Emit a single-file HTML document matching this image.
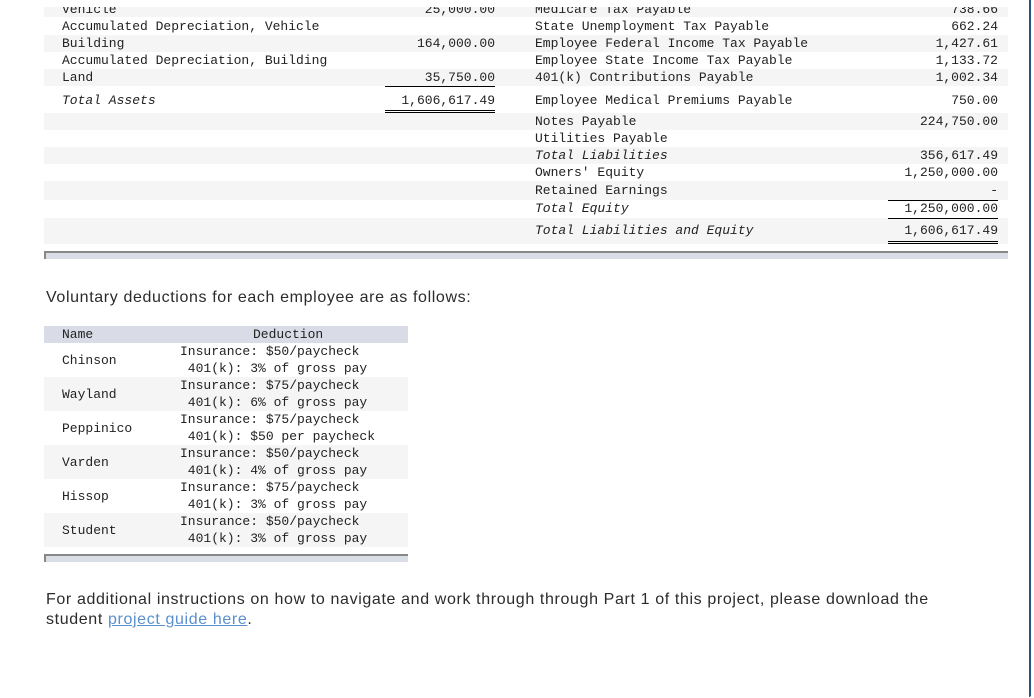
<!DOCTYPE html>
<html><head><meta charset="utf-8"><style>
*{margin:0;padding:0;box-sizing:border-box}
body{width:1034px;height:698px;background:#fff;position:relative;overflow:hidden;font-family:"Liberation Sans",sans-serif}
.m{font-family:"Liberation Mono",monospace;font-size:13px;color:#222;position:absolute;line-height:17px;white-space:pre}
.r{position:absolute;left:44px;width:964px}
.g{background:#f5f5f5}
.i{font-style:italic}
.v{text-align:right}
.ln{position:absolute;height:1px;background:#000}
.sb{position:absolute;height:8px;background:#d9dde6;border-top:2px solid #888;border-left:2px solid #888}
p{position:absolute;left:46px;font-size:16px;color:#2b2b2b;line-height:20px;letter-spacing:0.63px}
a{color:#5a8fcf;text-decoration:underline}
</style></head><body>
<div style="position:absolute;left:1029px;top:0;width:2px;height:697px;background:#2c5282;border-bottom-right-radius:4px"></div>
<!-- balance sheet rows -->
<div class="r g" style="top:7px;height:10px"></div>
<div class="r g" style="top:35px;height:17px"></div>
<div class="r g" style="top:69px;height:17px"></div>
<div class="r g" style="top:113px;height:17px"></div>
<div class="r g" style="top:147px;height:17px"></div>
<div class="r g" style="top:181px;height:19px"></div>
<div class="r g" style="top:218px;height:26px"></div>

<div class="m" style="left:62px;top:1px">Vehicle</div>
<div class="m" style="left:62px;top:18px">Accumulated Depreciation, Vehicle</div>
<div class="m" style="left:62px;top:35px">Building</div>
<div class="m" style="left:62px;top:52px">Accumulated Depreciation, Building</div>
<div class="m" style="left:62px;top:69px">Land</div>
<div class="m i" style="left:62px;top:92px">Total Assets</div>
<div class="m v" style="left:300px;width:195px;top:1px">25,000.00</div>
<div class="m v" style="left:300px;width:195px;top:35px">164,000.00</div>
<div class="m v" style="left:300px;width:195px;top:69px">35,750.00</div>
<div class="m v" style="left:300px;width:195px;top:92px">1,606,617.49</div>
<div class="ln" style="left:385px;width:110px;top:86px"></div>
<div class="ln" style="left:385px;width:110px;top:110px"></div>
<div class="ln" style="left:385px;width:110px;top:112px"></div>

<div class="m" style="left:535px;top:1px">Medicare Tax Payable</div>
<div class="m" style="left:535px;top:18px">State Unemployment Tax Payable</div>
<div class="m" style="left:535px;top:35px">Employee Federal Income Tax Payable</div>
<div class="m" style="left:535px;top:52px">Employee State Income Tax Payable</div>
<div class="m" style="left:535px;top:69px">401(k) Contributions Payable</div>
<div class="m" style="left:535px;top:92px">Employee Medical Premiums Payable</div>
<div class="m" style="left:535px;top:113px">Notes Payable</div>
<div class="m" style="left:535px;top:130px">Utilities Payable</div>
<div class="m i" style="left:535px;top:147px">Total Liabilities</div>
<div class="m" style="left:535px;top:164px">Owners' Equity</div>
<div class="m" style="left:535px;top:182px">Retained Earnings</div>
<div class="m i" style="left:535px;top:200px">Total Equity</div>
<div class="m i" style="left:535px;top:222px">Total Liabilities and Equity</div>

<div class="m v" style="left:800px;width:198px;top:1px">738.66</div>
<div class="m v" style="left:800px;width:198px;top:18px">662.24</div>
<div class="m v" style="left:800px;width:198px;top:35px">1,427.61</div>
<div class="m v" style="left:800px;width:198px;top:52px">1,133.72</div>
<div class="m v" style="left:800px;width:198px;top:69px">1,002.34</div>
<div class="m v" style="left:800px;width:198px;top:92px">750.00</div>
<div class="m v" style="left:800px;width:198px;top:113px">224,750.00</div>
<div class="m v" style="left:800px;width:198px;top:147px">356,617.49</div>
<div class="m v" style="left:800px;width:198px;top:164px">1,250,000.00</div>
<div class="m v" style="left:800px;width:198px;top:182px">-</div>
<div class="m v" style="left:800px;width:198px;top:200px">1,250,000.00</div>
<div class="m v" style="left:800px;width:198px;top:222px">1,606,617.49</div>
<div class="ln" style="left:888px;width:110px;top:200px"></div>
<div class="ln" style="left:888px;width:110px;top:218px"></div>
<div class="ln" style="left:888px;width:110px;top:241px"></div>
<div class="ln" style="left:888px;width:110px;top:243px"></div>
<!-- clip top -->
<div style="position:absolute;left:0;top:0;width:1028px;height:7px;background:#fff"></div>

<div class="sb" style="left:44px;width:964px;top:251px"></div>

<p style="top:288px">Voluntary deductions for each employee are as follows:</p>

<!-- deduction table -->
<div style="position:absolute;left:44px;top:326px;width:364px;height:17px;background:#d9dce6"></div>
<div class="m" style="left:62px;top:326px">Name</div>
<div class="m" style="left:253px;top:326px">Deduction</div>
<div class="r g" style="left:44px;width:364px;top:377px;height:34px"></div>
<div class="r g" style="left:44px;width:364px;top:445px;height:34px"></div>
<div class="r g" style="left:44px;width:364px;top:513px;height:34px"></div>

<div class="m" style="left:62px;top:352px">Chinson</div>
<div class="m" style="left:180px;top:343px">Insurance: $50/paycheck
 401(k): 3% of gross pay</div>
<div class="m" style="left:62px;top:386px">Wayland</div>
<div class="m" style="left:180px;top:377px">Insurance: $75/paycheck
 401(k): 6% of gross pay</div>
<div class="m" style="left:62px;top:420px">Peppinico</div>
<div class="m" style="left:180px;top:411px">Insurance: $75/paycheck
 401(k): $50 per paycheck</div>
<div class="m" style="left:62px;top:454px">Varden</div>
<div class="m" style="left:180px;top:445px">Insurance: $50/paycheck
 401(k): 4% of gross pay</div>
<div class="m" style="left:62px;top:488px">Hissop</div>
<div class="m" style="left:180px;top:479px">Insurance: $75/paycheck
 401(k): 3% of gross pay</div>
<div class="m" style="left:62px;top:522px">Student</div>
<div class="m" style="left:180px;top:513px">Insurance: $50/paycheck
 401(k): 3% of gross pay</div>
<div class="sb" style="left:44px;width:364px;top:554px"></div>

<p style="top:590px">For additional instructions on how to navigate and work through through Part 1 of this project, please download the<br>student <a>project guide here</a>.</p>
</body></html>
